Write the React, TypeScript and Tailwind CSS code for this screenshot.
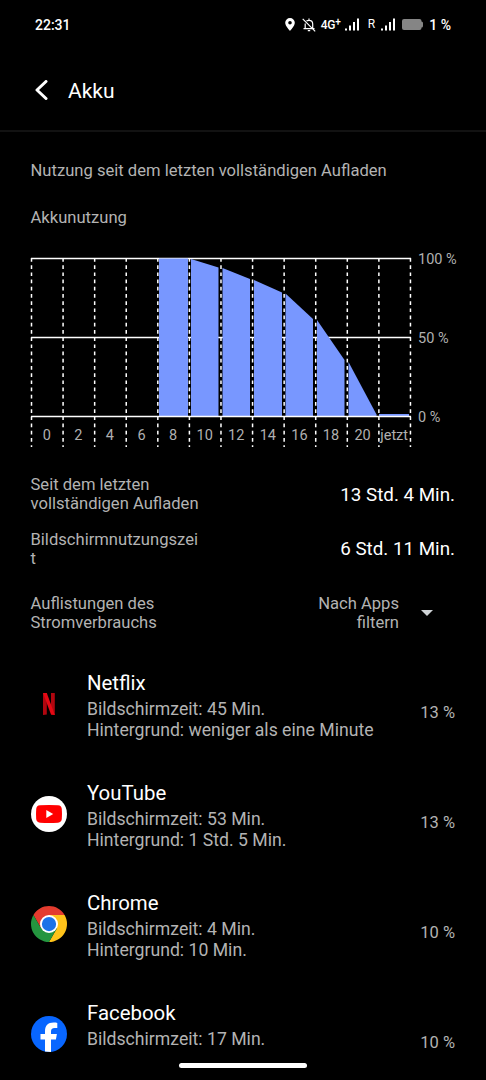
import type { ReactNode } from "react";

interface AppUsage {
  name: string;
  percent: string;
  lines: string[];
  icon: ReactNode;
}

const hours = ["0", "2", "4", "6", "8", "10", "12", "14", "16", "18", "20", "jetzt"];

// Battery level polygons, one for each two hour slot
const slots = [
  "128,0.5 157,0.5 157,158 128,158",
  "160,1 187.5,9.5 187.5,158 160,158",
  "191.5,10 219,21 219,158 191.5,158",
  "223,22 251,34.5 251,158 223,158",
  "254.5,35.5 282,61 282,158 254.5,158",
  "286,62 313.5,102 313.5,158 286,158",
  "317.5,104 345.5,156.5 345.5,158 317.5,158",
  "348,156 378,156 378,158 348,158",
];

function NetflixIcon() {
  return (
    <svg width="36" height="36" viewBox="0 0 36 36">
      <path d="M12 7h3.800v21.600l-3.800.4z" fill="#b1060f" />
      <path d="M20 7h3.800v22l-3.800-.4z" fill="#b1060f" />
      <path d="M12 7h3.800l8 22-3.800-.4z" fill="#e50914" />
    </svg>
  );
}

function YouTubeIcon() {
  return (
    <svg width="36" height="36" viewBox="0 0 36 36">
      <circle cx="18" cy="18" r="18" fill="#fff" />
      <path
        d="M9 9.300Q18 8.600 27 9.300q3.500.3 3.800 3.700.4 5 0 10-.3 3.400-3.800 3.700-9 .7-18 0-3.500-.3-3.800-3.700-.4-5 0-10 .3-3.400 3.800-3.700z"
        fill="#f00"
      />
      <path d="M15.300 14v8l6.900-4z" fill="#fff" />
    </svg>
  );
}

function ChromeIcon() {
  return (
    <svg width="36" height="36" viewBox="0 0 48 48">
      <path d="M24 12h20.780A24 24 0 0 0 3.220 12l10.390 18L24 24z" fill="#e33b2e" />
      <path d="M34.390 30 24 48A24 24 0 0 0 44.780 12H24v12z" fill="#ffc31a" />
      <path d="M13.610 30 3.220 12A24 24 0 0 0 24 48l10.390-18L24 24z" fill="#24953f" />
      <circle cx="24" cy="24" r="12" fill="#fff" />
      <circle cx="24" cy="24" r="9.500" fill="#1b72e8" />
    </svg>
  );
}

function FacebookIcon() {
  return (
    <svg width="36" height="36" viewBox="0 0 36 36">
      <circle cx="18" cy="18" r="18" fill="#0866ff" />
      <path
        d="M14 35.600V23.500H9.500V18H14v-2.600c0-6 2.800-8.800 8.700-8.800 1.300 0 2.700.2 3.600.4v5c-.5-.1-1.400-.1-2.500-.1-2.900 0-3.800 1.100-3.800 3.900V18h5.900l-1 5.500H20v12.400z"
        fill="#fff"
      />
    </svg>
  );
}

const apps: AppUsage[] = [
  {
    name: "Netflix",
    percent: "13 %",
    lines: ["Bildschirmzeit: 45 Min.", "Hintergrund: weniger als eine Minute"],
    icon: <NetflixIcon />,
  },
  {
    name: "YouTube",
    percent: "13 %",
    lines: ["Bildschirmzeit: 53 Min.", "Hintergrund: 1 Std. 5 Min."],
    icon: <YouTubeIcon />,
  },
  {
    name: "Chrome",
    percent: "10 %",
    lines: ["Bildschirmzeit: 4 Min.", "Hintergrund: 10 Min."],
    icon: <ChromeIcon />,
  },
  {
    name: "Facebook",
    percent: "10 %",
    lines: ["Bildschirmzeit: 17 Min."],
    icon: <FacebookIcon />,
  },
];

function SignalIcon() {
  return (
    <svg width="14" height="13" viewBox="0 0 14 13" fill="#fff">
      <rect x="0" y="10.500" width="2" height="2" />
      <rect x="4" y="7.500" width="2" height="5" />
      <rect x="8" y="4" width="2" height="8.500" />
      <rect x="12" y="0.500" width="2" height="12" />
    </svg>
  );
}

function StatusBar() {
  return (
    <div className="flex h-12 shrink-0 items-center pl-[35px] pr-[35px] pt-px text-sm font-medium text-white">
      <span>22:31</span>
      <div className="ml-auto flex items-center">
        <svg width="10" height="13" viewBox="0 0 10 13" className="mr-[7px]">
          <path
            d="M5 0a4.800 4.800 0 0 0-4.800 4.800C.2 8 5 13 5 13s4.800-5 4.800-8.200A4.800 4.800 0 0 0 5 0zm0 6.600a1.800 1.800 0 1 1 0-3.600 1.800 1.800 0 0 1 0 3.600z"
            fill="#fff"
          />
        </svg>
        <svg
          width="14"
          height="14"
          viewBox="0 0 14 14"
          fill="none"
          stroke="#fff"
          strokeWidth="1.200"
          className="mr-[5px]"
        >
          <path d="M3.200 5.500v5h7.500V6c0-2.200-1.500-3.700-3.700-3.700-1 0-1.800.3-2.500.8M1.500 10.700h11M7 .5v1.800M5.800 12.700h2.400M.7.8l12.500 12.500" />
        </svg>
        <span className="mr-[4px] flex w-[20px] whitespace-nowrap text-[12px] leading-4 tracking-[-0.3px]">
          4G<span className="-mt-[3px] text-[10px]">+</span>
        </span>
        <SignalIcon />
        <span className="ml-[9px] mr-[6px] pt-px text-[12px] font-normal">R</span>
        <SignalIcon />
        <svg width="21" height="11" viewBox="0 0 21 11" className="ml-[7px] mr-[6px]">
          <rect width="19.500" height="11" rx="2" fill="#858585" />
          <rect x="18" y="2.500" width="3" height="6" rx="1.500" fill="#858585" />
        </svg>
        <span>1 %</span>
      </div>
    </div>
  );
}

function BatteryChart() {
  return (
    <div className="relative mt-[29px] flex pl-[30px]">
      <svg width="382" height="192" viewBox="-1 -1 382 192">
        <path d="M0 .5h380M0 79.500h380" stroke="#fff" strokeWidth="1.500" />
        {slots.map((points) => (
          <polygon key={points} points={points} fill="#7897ff" />
        ))}
        <path d="M0 158.500h380" stroke="#fff" strokeWidth="1.500" />
        {Array.from({ length: 13 }, (_, i) => (
          <path
            key={i}
            d={`M${0.5 + i * 31.58} 0V189`}
            stroke="#fff"
            strokeWidth="1.500"
            strokeDasharray="3.700 3.500"
          />
        ))}
      </svg>
      <div className="absolute left-[31px] top-[169px] flex w-[379px] text-[14.500px] leading-5 text-[#b0b0b0]">
        {hours.map((h) => (
          <span key={h} className="flex w-0 flex-1 justify-center">
            {h}
          </span>
        ))}
      </div>
      <div className="-mt-[7px] ml-[6px] flex h-[178px] flex-col justify-between text-[14.500px] leading-5 text-[#b0b0b0]">
        <span>100 %</span>
        <span>50 %</span>
        <span>0 %</span>
      </div>
    </div>
  );
}

export default function App() {
  return (
    <div className="relative flex h-[1080px] w-[486px] flex-col overflow-hidden bg-black font-[Roboto,sans-serif] text-[#b3b3b3]">
      <StatusBar />
      <header className="flex h-[84px] shrink-0 items-center border-b-2 border-[#121212] pl-[35px] pt-[2px] text-[21px] text-white">
        <svg
          width="14"
          height="20"
          viewBox="0 0 14 20"
          fill="none"
          stroke="#fff"
          strokeWidth="3"
          strokeLinecap="round"
          strokeLinejoin="round"
          className="mr-[19px]"
        >
          <path d="M11 1.500 2 10l9 8.500" />
        </svg>
        <h1 className="pt-[3px]">Akku</h1>
      </header>

      <main className="text-[16.600px] leading-[19.400px]">
        <p className="ml-[30.500px] mt-[29px]">Nutzung seit dem letzten vollständigen Aufladen</p>
        <p className="ml-[30.500px] mt-[28px]">Akkunutzung</p>
        <BatteryChart />

        <div className="mt-[26px] flex items-center justify-between pl-[30.500px] pr-[31px]">
          <p className="w-[170px]">Seit dem letzten vollständigen Aufladen</p>
          <span className="pt-[2px] text-[18.800px] text-white">13 Std. 4 Min.</span>
        </div>
        <div className="mt-[16px] flex items-center justify-between pl-[30.500px] pr-[31px]">
          <p className="w-[170px] break-all">Bildschirmnutzungszeit</p>
          <span className="pt-[2px] text-[18.800px] text-white">6 Std. 11 Min.</span>
        </div>
        <div className="mt-[25.500px] flex items-center pl-[30.500px]">
          <p className="w-[170px]">Auflistungen des Stromverbrauchs</p>
          <p className="ml-auto w-[100px] text-right">Nach Apps filtern</p>
          <svg width="12" height="6" viewBox="0 0 12 6" className="ml-[22px] mr-[53px]">
            <path d="M0 0h12L6 6z" fill="#cfd3d6" />
          </svg>
        </div>

        <ul className="mt-[27.500px]">
          {apps.map((app) => (
            <li key={app.name} className="flex h-[109.800px] pl-[31px] pr-[31px]">
              <div className="mt-[26px] h-9 w-9">{app.icon}</div>
              <div className="ml-[20px] mt-[11px] whitespace-nowrap text-[17.650px] leading-[20.700px]">
                <h2 className="mb-[3px] text-[20.400px] leading-[25px] text-white">{app.name}</h2>
                {app.lines.map((line) => (
                  <p key={line}>{line}</p>
                ))}
              </div>
              <span className="ml-auto mt-[43px] text-[16.500px] leading-5">{app.percent}</span>
            </li>
          ))}
        </ul>
      </main>

      <div className="absolute bottom-[12px] left-[179px] h-[5px] w-32 rounded-full bg-white" />
    </div>
  );
}
